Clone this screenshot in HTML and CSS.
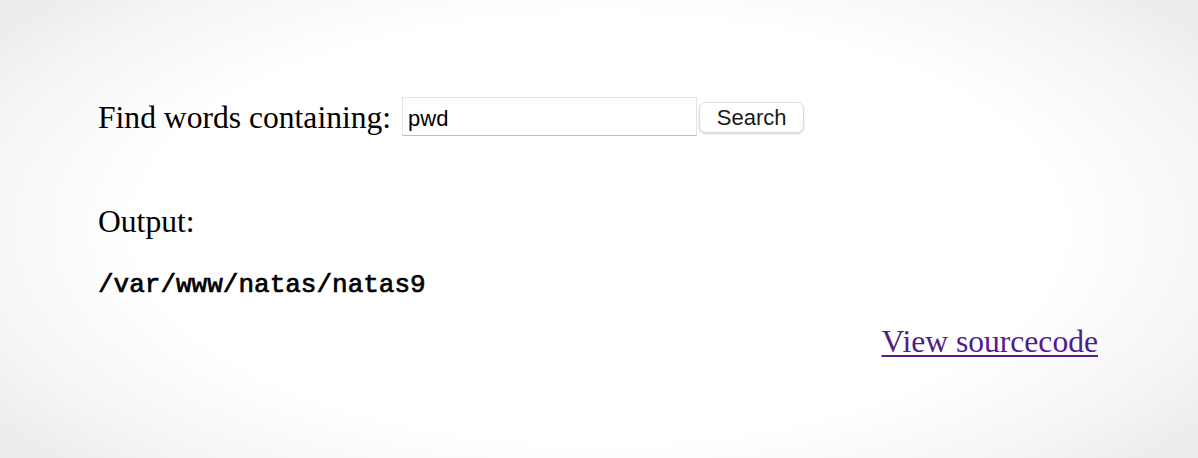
FILE: index.html
```html
<!DOCTYPE html>
<html>
<head>
<meta charset="utf-8">
<link rel="stylesheet" href="styles.css">
</head>
<body>
<div class="page">
  <div class="content">
    <form class="search-row">
      <label class="label" for="needle">Find words containing:</label>
      <input class="field" id="needle" type="text" value="pwd">
      <button class="btn" type="button">Search</button>
    </form>
    <div class="output-title">Output:</div>
    <pre class="output">/var/www/natas/natas9</pre>
    <div class="source">
      <a class="source-link" href="#">View sourcecode</a>
    </div>
  </div>
</div>
</body>
</html>
```

FILE: styles.css
```css
html, body {
  margin: 0;
  padding: 0;
  height: 100%;
}
body {
  background: radial-gradient(ellipse 62% 75% at 50% 50%, #ffffff 0%, #ffffff 62%, #f5f5f5 86%, #ececec 100%);
  font-family: "Liberation Serif", "Times New Roman", serif;
  color: #000;
}
.page {
  width: 1198px;
  height: 458px;
  box-sizing: border-box;
  padding: 0 100px 0 98px;
}
.content {
  padding-top: 97px;
}
.search-row {
  display: flex;
  align-items: center;
  margin: 0;
  height: 39px;
}
.label {
  font-size: 31.6px;
  margin-right: 11px;
  line-height: 1;
  position: relative;
  top: 1px;
}
.field {
  box-sizing: border-box;
  width: 295px;
  height: 39px;
  margin: 0;
  border: 1px solid #e4e4e4;
  border-bottom: 1.5px solid #bdbdbd;
  padding: 4px 0 0 5px;
  font-family: "Liberation Sans", Arial, sans-serif;
  font-size: 22px;
  color: #000;
  background: #fff;
  outline: none;
}
.btn {
  box-sizing: border-box;
  width: 105px;
  height: 31px;
  margin: 2px 0 0 2px;
  border: 1px solid #dcdcdc;
  border-radius: 7px;
  background: #fff;
  box-shadow: 0 1px 2px rgba(0, 0, 0, 0.18);
  font-family: "Liberation Sans", Arial, sans-serif;
  font-size: 22px;
  color: #1a1a1a;
  padding: 0;
  line-height: 29px;
}
.output-title {
  font-size: 31.6px;
  margin-top: 68px;
  line-height: 36px;
}
.output {
  font-family: "Liberation Mono", "Courier New", monospace;
  font-size: 26px;
  font-weight: normal;
  -webkit-text-stroke: 0.7px #000;
  margin: 30px 0 0 0;
  line-height: 30px;
}
.source {
  display: flex;
  justify-content: flex-end;
  margin-top: 24px;
}
.source-link {
  font-size: 31.6px;
  color: #521c8b;
  text-decoration: underline;
  text-decoration-thickness: 2px;
  text-underline-offset: 3px;
  line-height: 36px;
}
```
